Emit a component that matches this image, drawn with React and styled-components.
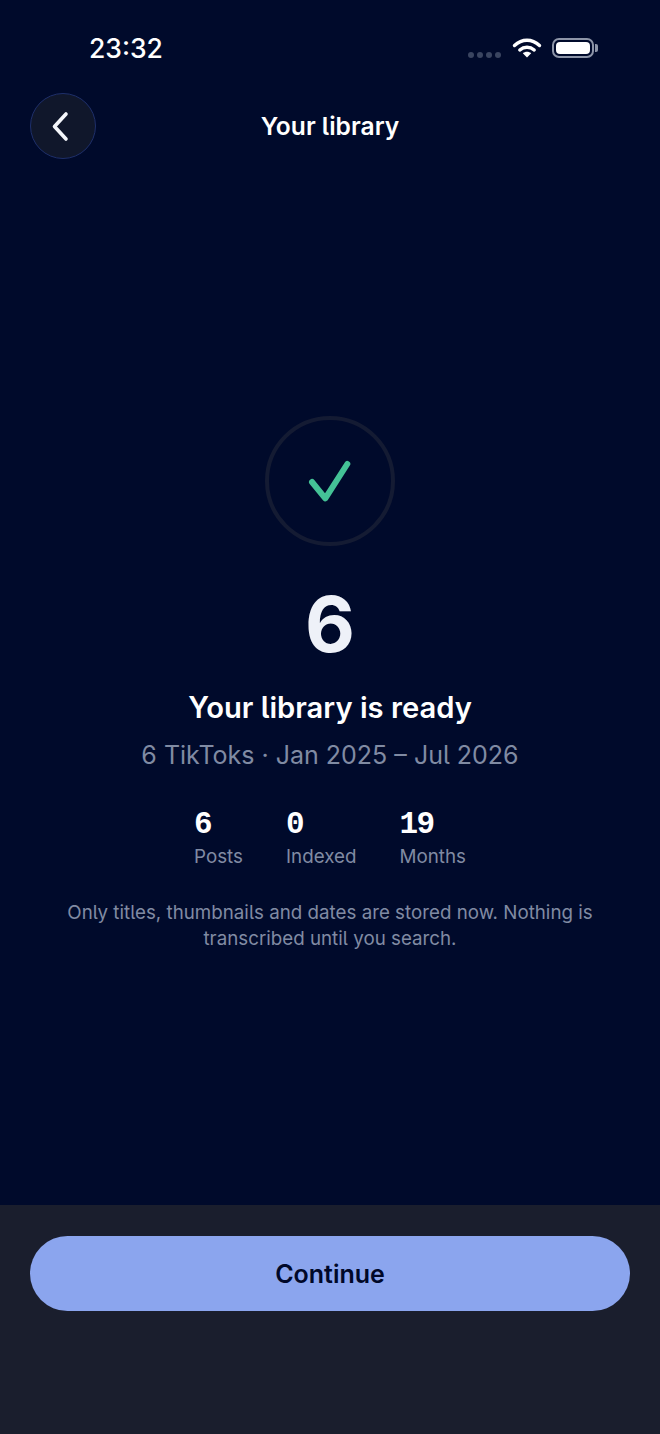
import React from "react";
import styled, { createGlobalStyle } from "styled-components";

const GlobalStyle = createGlobalStyle`
  html, body {
    margin: 0;
    padding: 0;
    background: #000a2b;
  }
  * {
    box-sizing: border-box;
  }
`;

const STATS = [
  { value: "6", label: "Posts" },
  { value: "0", label: "Indexed" },
  { value: "19", label: "Months" },
];

export default function App() {
  return (
    <Screen>
      <GlobalStyle />
      <StatusBar>
        <Clock>23:32</Clock>
        <StatusIcons>
          <SignalDots>
            <Dot />
            <Dot />
            <Dot />
            <Dot />
          </SignalDots>
          <svg width="30" height="22" viewBox="0 0 30 22">
            <path d="M2.5 8.5C10 1.5 20 1.5 27.5 8.5" fill="none" stroke="#fff" strokeWidth="3.4" strokeLinecap="round" />
            <path d="M7.8 13C12 9.4 18 9.4 22.2 13" fill="none" stroke="#fff" strokeWidth="3.4" strokeLinecap="round" />
            <path d="M10.8 16.2L15 20.6L19.2 16.2C16.8 14.2 13.2 14.2 10.8 16.2Z" fill="#fff" />
          </svg>
          <Battery>
            <BatteryFill />
            <BatteryCap />
          </Battery>
        </StatusIcons>
      </StatusBar>

      <Header>
        <BackButton aria-label="Back">
          <svg width="24" height="32" viewBox="0 0 24 32">
            <path d="M17 4L5.5 16.5L17 29" fill="none" stroke="#f4f6fb" strokeWidth="3.6" strokeLinecap="round" strokeLinejoin="round" />
          </svg>
        </BackButton>
        <HeaderTitle>Your library</HeaderTitle>
      </Header>

      <Main>
        <CheckRing>
          <svg width="44" height="44" viewBox="0 0 44 44">
            <path d="M4 23L17.3 39.3L39.3 5" fill="none" stroke="#44c296" strokeWidth="6" strokeLinecap="round" strokeLinejoin="round" />
          </svg>
        </CheckRing>
        <BigCount>6</BigCount>
        <Title>Your library is ready</Title>
        <Subtitle>6 TikToks · Jan 2025 – Jul 2026</Subtitle>
        <Stats>
          {STATS.map((stat) => (
            <Stat key={stat.label}>
              <StatValue>{stat.value}</StatValue>
              <StatLabel>{stat.label}</StatLabel>
            </Stat>
          ))}
        </Stats>
        <Note>
          Only titles, thumbnails and dates are stored now. Nothing is
          <br />
          transcribed until you search.
        </Note>
      </Main>

      <Footer>
        <ContinueButton>Continue</ContinueButton>
      </Footer>
    </Screen>
  );
}

const Screen = styled.div`
  display: flex;
  flex-direction: column;
  width: 660px;
  height: 1434px;
  background: #000a2b;
  font-family: Inter, "Liberation Sans", sans-serif;
  font-feature-settings: "cv05";
  overflow: hidden;
`;

const StatusBar = styled.div`
  display: flex;
  justify-content: space-between;
  align-items: center;
  height: 56px;
  padding: 40px 66px 0 89px;
  flex-shrink: 0;
`;

const Clock = styled.span`
  color: #fff;
  font-size: 26.5px;
  font-weight: 500;
  line-height: 30px;
`;

const StatusIcons = styled.div`
  display: flex;
  align-items: center;
  gap: 10px;
`;

const SignalDots = styled.div`
  display: flex;
  gap: 3px;
  margin-top: 14px;
  margin-right: 1px;
`;

const Dot = styled.span`
  width: 6px;
  height: 6px;
  border-radius: 50%;
  background: #3a4560;
`;

const Battery = styled.div`
  position: relative;
  width: 42px;
  height: 20px;
  border: 2px solid #8d95a8;
  border-radius: 7px;
  padding: 2px;
`;

const BatteryFill = styled.div`
  width: 100%;
  height: 100%;
  border-radius: 4px;
  background: #fff;
`;

const BatteryCap = styled.span`
  position: absolute;
  top: 4px;
  right: -6px;
  width: 3px;
  height: 8px;
  border-radius: 0 2px 2px 0;
  background: #8d95a8;
`;

const Header = styled.div`
  position: relative;
  display: flex;
  justify-content: center;
  align-items: center;
  height: 66px;
  margin-top: 37px;
  padding: 0 30px;
  flex-shrink: 0;
`;

const BackButton = styled.button`
  position: absolute;
  left: 30px;
  top: 0;
  display: flex;
  justify-content: center;
  align-items: center;
  width: 66px;
  height: 66px;
  padding: 0 4px 0 0;
  border: 1px solid #1e2f6a;
  border-radius: 50%;
  background: #10172b;
`;

const HeaderTitle = styled.h1`
  margin: 0;
  color: #fff;
  font-size: 24.6px;
  font-weight: 600;
  line-height: 30px;
`;

const Main = styled.main`
  display: flex;
  flex: 1;
  flex-direction: column;
  align-items: center;
  padding-top: 257px;
`;

const CheckRing = styled.div`
  display: flex;
  justify-content: center;
  align-items: center;
  width: 130px;
  height: 130px;
  border: 4px solid #141b33;
  border-radius: 50%;
`;

const BigCount = styled.div`
  margin-top: 28px;
  color: #eef1f8;
  font-family: Inter, sans-serif;
  font-size: 77px;
  font-weight: 700;
  line-height: 100px;
`;

const Title = styled.h2`
  margin: 16px 0 0;
  color: #fff;
  font-size: 29.2px;
  font-weight: 600;
  line-height: 36px;
`;

const Subtitle = styled.p`
  margin: 13px 0 0;
  color: #808ba3;
  font-size: 25px;
  line-height: 32px;
`;

const Stats = styled.div`
  display: flex;
  gap: 43px;
  margin-top: 37px;
`;

const Stat = styled.div`
  display: flex;
  flex-direction: column;
  align-items: flex-start;
`;

const StatValue = styled.span`
  color: #fff;
  font-family: "Liberation Mono", monospace;
  font-size: 31px;
  font-weight: 700;
  letter-spacing: -1.5px;
  line-height: 34px;
`;

const StatLabel = styled.span`
  margin-top: 2px;
  color: #808ba3;
  font-size: 18.8px;
  line-height: 26px;
`;

const Note = styled.p`
  margin: 30px 0 0;
  color: #808ba3;
  font-size: 18.75px;
  line-height: 26px;
  text-align: center;
`;

const Footer = styled.footer`
  height: 229px;
  padding: 31px 30px 0;
  background: #1a1e2d;
  flex-shrink: 0;
`;

const ContinueButton = styled.button`
  display: block;
  width: 100%;
  height: 75px;
  border: 0;
  border-radius: 38px;
  background: #8ba5ee;
  color: #000829;
  font-family: Inter, "Liberation Sans", sans-serif;
  font-size: 25px;
  font-weight: 600;
`;
